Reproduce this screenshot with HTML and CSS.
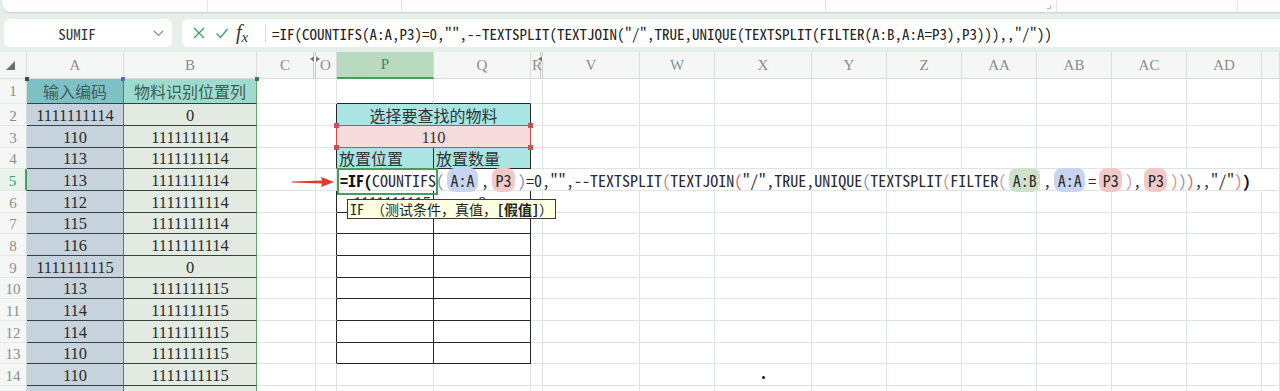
FILE: index.html
```html
<!DOCTYPE html>
<html lang="zh-CN">
<head>
<meta charset="utf-8">
<title>WPS 表格</title>
<link rel="stylesheet" href="styles.css">
</head>
<body>
<div class="ribbon">
  <span class="rseg s1"></span><span class="rseg s2"></span><span class="rseg s3"></span><span class="rseg s4"><i class="launch"></i></span><span class="rseg s5"></span>
</div>
<div class="fbar">
  <div class="namebox">
    <span class="nb-text">SUMIF</span>
    <svg class="chev" width="11" height="7" viewBox="0 0 11 7"><polyline points="1,1 5.5,5.5 10,1" fill="none" stroke="#888" stroke-width="1.2"/></svg>
  </div>
  <div class="fbox">
    <svg class="ic-x" width="14" height="14" viewBox="0 0 14 14"><path d="M2 2 L12 12 M12 2 L2 12" stroke="#3fa463" stroke-width="1.4" fill="none"/></svg>
    <svg class="ic-ok" width="14" height="14" viewBox="0 0 14 14"><polyline points="1.5,7.5 5.5,11.5 12.5,3" stroke="#3fa463" stroke-width="1.4" fill="none"/></svg>
    <span class="fx">f<sub>x</sub></span>
    <span class="fsep"></span>
    <span class="ftext">=IF(COUNTIFS(A:A,P3)=0,"",--TEXTSPLIT(TEXTJOIN("/",TRUE,UNIQUE(TEXTSPLIT(FILTER(A:B,A:A=P3),P3))),,"/"))</span>
  </div>
</div>
<div class="sheet">
<table class="grid">
<colgroup><col class="c-rh"><col class="c-a"><col class="c-b"><col class="c-c"><col class="c-o"><col class="c-p"><col class="c-q"><col class="c-r"><col class="c-v"><col class="c-w"><col class="c-x"><col class="c-y"><col class="c-n"><col class="c-n"><col class="c-n"><col class="c-n"><col class="c-n"><col class="c-ae"></colgroup>
<thead>
<tr><th class="corner"><svg width="9" height="9" viewBox="0 0 9 9"><polygon points="9,0 9,9 0,9" fill="#6d6d6d"/></svg></th><th>A</th><th>B</th><th class="hidl">C</th><th class="hidr">O<i class="hidmark"></i></th><th class="sel">P</th><th>Q</th><th class="hidr hr2">R<i class="hidmark"></i></th><th>V</th><th>W</th><th>X</th><th>Y</th><th>Z</th><th>AA</th><th>AB</th><th>AC</th><th>AD</th><th></th></tr>
</thead>
<tbody>
<tr class="h25"><th>1</th><td class="a a1">输入编码<i class="hd hd-a"></i></td><td class="b b1">物料识别位置列<i class="hd hd-ab"></i><i class="hd hd-bc"></i></td><td></td><td></td><td class="kb"></td><td class="kb"></td><td></td><td></td><td></td><td></td><td></td><td></td><td></td><td></td><td></td><td></td><td></td></tr>
<tr class="h22"><th>2</th><td class="a">1111111114</td><td class="b">0</td><td></td><td class="kr"></td><td class="cy kb kr pred" colspan="2">选择要查找的物料</td><td></td><td></td><td></td><td></td><td></td><td></td><td></td><td></td><td></td><td></td><td></td></tr>
<tr class="h22"><th>3</th><td class="a">110</td><td class="b">1111111114</td><td></td><td class="rr"></td><td class="pk" colspan="2">110<i class="hd hd-tl"></i><i class="hd hd-tr"></i><i class="hd hd-bl"></i><i class="hd hd-br"></i></td><td></td><td></td><td></td><td></td><td></td><td></td><td></td><td></td><td></td><td></td><td></td></tr>
<tr class="h21"><th>4</th><td class="a">113</td><td class="b">1111111114</td><td></td><td class="kr"></td><td class="cy kb kr lft">放置位置</td><td class="cy kb kr lft">放置数量</td><td></td><td></td><td></td><td></td><td></td><td></td><td></td><td></td><td></td><td></td><td></td></tr>
<tr class="h22"><th class="act">5</th><td class="a">113</td><td class="b">1111111114</td><td></td><td></td><td class="edit" colspan="12"><div class="etext"><b>=IF(</b>COUNTIFS<span class="q1">(</span><span class="pill pb">A:A</span>,<span class="pill pr">P3</span><span class="q1">)</span>=0,"",--TEXTSPLIT<span class="q2">(</span>TEXTJOIN<span class="q3">(</span>"/",TRUE,UNIQUE<span class="q4">(</span>TEXTSPLIT<span class="q5">(</span>FILTER<span class="q6">(</span><span class="pill pg">A:B</span>,<span class="pill pb">A:A</span>=<span class="pill pr">P3</span><span class="q6">)</span>,<span class="pill pr">P3</span><span class="q5">)</span><span class="q4">)</span><span class="q3">)</span>,,"/"<span class="q2">)</span><b>)</b></div></td><td></td></tr>
<tr class="h22"><th>6</th><td class="a">112</td><td class="b">1111111114</td><td></td><td class="kr"></td><td class="kb kr num">1111111115</td><td class="kb kr">0</td><td></td><td></td><td></td><td></td><td></td><td></td><td></td><td></td><td></td><td></td><td></td></tr>
<tr class="h21"><th>7</th><td class="a">115</td><td class="b">1111111114</td><td></td><td class="kr"></td><td class="kb kr"></td><td class="kb kr"></td><td></td><td></td><td></td><td></td><td></td><td></td><td></td><td></td><td></td><td></td><td></td></tr>
<tr class="h22"><th>8</th><td class="a">116</td><td class="b">1111111114</td><td></td><td class="kr"></td><td class="kb kr"></td><td class="kb kr"></td><td></td><td></td><td></td><td></td><td></td><td></td><td></td><td></td><td></td><td></td><td></td></tr>
<tr class="h22"><th>9</th><td class="a">1111111115</td><td class="b">0</td><td></td><td class="kr"></td><td class="kb kr"></td><td class="kb kr"></td><td></td><td></td><td></td><td></td><td></td><td></td><td></td><td></td><td></td><td></td><td></td></tr>
<tr class="h21"><th>10</th><td class="a">113</td><td class="b">1111111115</td><td></td><td class="kr"></td><td class="kb kr"></td><td class="kb kr"></td><td></td><td></td><td></td><td></td><td></td><td></td><td></td><td></td><td></td><td></td><td></td></tr>
<tr class="h22"><th>11</th><td class="a">114</td><td class="b">1111111115</td><td></td><td class="kr"></td><td class="kb kr"></td><td class="kb kr"></td><td></td><td></td><td></td><td></td><td></td><td></td><td></td><td></td><td></td><td></td><td></td></tr>
<tr class="h22"><th>12</th><td class="a">114</td><td class="b">1111111115</td><td></td><td class="kr"></td><td class="kb kr"></td><td class="kb kr"></td><td></td><td></td><td></td><td></td><td></td><td></td><td></td><td></td><td></td><td></td><td></td></tr>
<tr class="h21"><th>13</th><td class="a">110</td><td class="b">1111111115</td><td></td><td class="kr"></td><td class="kb kr"></td><td class="kb kr"></td><td></td><td></td><td></td><td></td><td></td><td></td><td></td><td></td><td></td><td></td><td></td></tr>
<tr class="h22"><th>14</th><td class="a">110</td><td class="b">1111111115</td><td></td><td></td><td></td><td></td><td></td><td></td><td></td><td></td><td></td><td></td><td></td><td></td><td></td><td></td><td></td></tr>
<tr class="h22"><th></th><td class="a"></td><td class="b"></td><td></td><td></td><td></td><td></td><td></td><td></td><td></td><td></td><td></td><td></td><td></td><td></td><td></td><td></td><td></td></tr>
</tbody>
</table>
<svg class="arrow" width="42" height="10" viewBox="0 0 42 10"><polygon points="0,4.4 30,3.6 29,0 42,5 29,10 30,6.4 0,5.6" fill="#e8352b"/></svg>
<div class="tip">IF （测试条件，真值，<b>[假值]</b>）</div>
<i class="dot"></i>
</div>
</body>
</html>
```
FILE: styles.css
```css
* { box-sizing: border-box; margin: 0; padding: 0; }
html, body { width: 1280px; height: 391px; overflow: hidden; }
body { background: #e7efe9; font-family: "Liberation Serif", "Noto Sans CJK SC", serif; color: #2a2a2a; }

/* ribbon remnant */
.ribbon { height: 12px; margin-left: 2px; display: flex; background: #fdfdfd; border-radius: 0 0 0 8px; box-shadow: 0 1px 2px rgba(0,0,0,0.14); }
.rseg { height: 100%; border-right: 1px solid #e2e5e2; position: relative; }
.s1 { width: 206px; } .s2 { width: 194px; } .s3 { width: 424px; } .s4 { width: 231px; } .s5 { width: 181px; }
.launch { position: absolute; right: 5px; top: 5px; width: 4px; height: 4px; border-right: 1px solid #bbb; border-bottom: 1px solid #bbb; }

/* formula bar */
.fbar { height: 40px; display: flex; gap: 10px; padding: 7px 0 0 4px; }
.namebox { width: 168px; height: 28px; background: #fff; border-radius: 6px; display: flex; align-items: center; }
.nb-text { width: 146px; text-align: center; font: 15px "Noto Sans Mono CJK SC", "Liberation Mono", monospace; color: #333; }
.chev { margin-left: 3px; }
.fbox { flex: 1; height: 28px; background: #fff; border-radius: 6px 0 0 6px; display: flex; align-items: center; padding-left: 10px; }
.ic-ok { margin-left: 9px; }
.fx { margin-left: 7px; width: 20px; font: italic 20px "Liberation Serif", serif; color: #333; line-height: 1; }
.fx sub { font-size: 15px; vertical-align: -3px; }
.fsep { margin-left: 9px; width: 1px; height: 18px; background: #d8d8d8; }
.ftext { margin-left: 6px; font: 15px "Noto Sans Mono CJK SC", "Liberation Mono", monospace; color: #222; white-space: nowrap; }

/* sheet */
.sheet { position: relative; }
.grid { width: 1280px; table-layout: fixed; border-collapse: separate; border-spacing: 0; }
.c-rh { width: 27px; } .c-a { width: 97px; } .c-b { width: 133px; } .c-c { width: 59px; } .c-o { width: 21px; }
.c-p { width: 97px; } .c-q { width: 97px; } .c-r { width: 12px; } .c-v { width: 97px; } .c-w { width: 75px; }
.c-x { width: 97px; } .c-y { width: 75px; } .c-n { width: 75px; } .c-ae { width: 18px; }

thead th { height: 27px; background: #f4f7f5; color: #8d8d8d; font: 15px "Liberation Serif", serif; font-weight: normal; border-right: 1px solid #d8dfda; border-bottom: 1px solid #d8dfda; position: relative; }
thead th.corner { text-align: left; padding-left: 6px; }
thead th.corner svg { display: block; }
thead th.sel { background: #b9d9c0; color: #3b8d52; border-bottom: 2px solid #43a05a; }
thead th.hidl { border-right: 3px double #c5ccc7; }
thead th.hidr { text-align: left; padding-left: 4px; }
thead th.hr2 { padding-left: 1px; border-right: 3px double #c5ccc7; }
.hidmark { position: absolute; top: 4px; left: -6px; width: 10px; height: 6px; background: #fff; border-radius: 1px; }
.hidmark::before, .hidmark::after { content: ""; position: absolute; top: 0; border-top: 3px solid transparent; border-bottom: 3px solid transparent; }
.hidmark::before { left: 0; border-right: 4px solid #777; }
.hidmark::after { right: 0; border-left: 4px solid #777; }
.hr2 .hidmark { left: 7px; }

tbody th { background: #f4f7f5; color: #8d8d8d; font: 15px "Liberation Serif", serif; font-weight: normal; border-right: 1px solid #d3dbd5; border-bottom: 1px solid #e4e9e5; vertical-align: bottom; line-height: 18px; }
tbody th.act { color: #3e9a55; border-right: 2px solid #43a05a; background: #eaf2ec; }
tr.h25 { height: 25px; } tr.h22 { height: 22px; } tr.h21 { height: 21px; }
tr.h25 td, tr.h25 th { vertical-align: middle; }
td { padding: 0; background: #fff; border-right: 1px solid #dce5df; border-bottom: 1px solid #dce5df; font: 16.5px "Liberation Serif", "Noto Sans CJK SC", serif; line-height: 18px; vertical-align: bottom; text-align: center; white-space: nowrap; color: #2b2b2b; }

td.a { background: #c6d3dc; border-bottom-color: #36404a; border-right: 1px solid #4e6fc2; }
td.b { background: #e2eae1; border-bottom-color: #383f38; border-right: 1px solid #64a46f; }
td.a1 { background: #7ec1c4; font-family: "Noto Sans CJK SC", sans-serif; font-size: 16px; color: #3c5c5e; position: relative; }
td.b1 { background: #9fdbcd; font-family: "Noto Sans CJK SC", sans-serif; font-size: 16px; color: #3c5c55; position: relative; }
.hd { position: absolute; width: 4px; height: 4px; }
.hd-a { left: -2px; top: -2px; background: #3c4b55; }
.hd-ab { left: -3px; top: -2px; background: #4e6fc2; }
.hd-bc { right: -3px; top: -2px; background: #3f7b48; }

td.kb { border-bottom-color: #262626; }
td.kr { border-right-color: #262626; }
td.rr { border-right-color: #d04a4a; }
td.pred { border-bottom-color: #d04a4a; }
td.cy { background: #a9e5e3; font-family: "Noto Sans CJK SC", sans-serif; font-size: 16px; line-height: 18px; color: #333; vertical-align: middle; }
td.lft { text-align: left; padding-left: 2px; }
td.pk { background: #f6dcdc; border-right-color: #d04a4a; border-bottom-color: #d04a4a; position: relative; color: #333; }
.hd-tl, .hd-tr, .hd-bl, .hd-br { width: 5px; height: 5px; background: #c85252; }
.hd-tl { left: -3px; top: -3px; } .hd-tr { right: -3px; top: -3px; }
.hd-bl { left: -3px; bottom: -3px; } .hd-br { right: -3px; bottom: -3px; }
td.num { text-align: right; padding-right: 2px; }

td.edit { position: relative; text-align: left; background: #fff; border-right: none; overflow: visible; vertical-align: middle; }
td.edit::before { content: ""; position: absolute; left: 0; top: -1px; width: 97px; height: 23px; border: 2px solid #43a05a; }
.etext { position: relative; padding-left: 3px; font: 16px "Noto Sans Mono CJK SC", "Liberation Mono", monospace; color: #2a2a2a; white-space: nowrap; line-height: 20px; }
.etext b { font-weight: 700; color: #111; }
.pill { padding: 0 3.5px; margin: 0 3px; border-radius: 8px; }
.pb { background: #c9d4f1; } .pr { background: #f1c9c9; } .pg { background: #cfe2c9; }
.q1 { color: #7f8fc8; } .q2 { color: #c98a8a; } .q3 { color: #d36a6a; } .q4 { color: #8a9ab8; } .q5 { color: #d79a80; } .q6 { color: #c89ab8; }

.arrow { position: absolute; left: 292px; top: 125px; }
.tip { position: absolute; left: 347px; top: 147px; height: 20px; padding: 0 2px; background: #ffffe1; border: 1px solid #3a3a3a; font: 14px "Noto Sans Mono CJK SC", "Noto Sans CJK SC", monospace; line-height: 18px; color: #222; white-space: nowrap; }
.tip b { font-weight: 700; }
.dot { position: absolute; left: 762px; top: 324px; width: 3px; height: 3px; border-radius: 50%; background: #111; }
```
